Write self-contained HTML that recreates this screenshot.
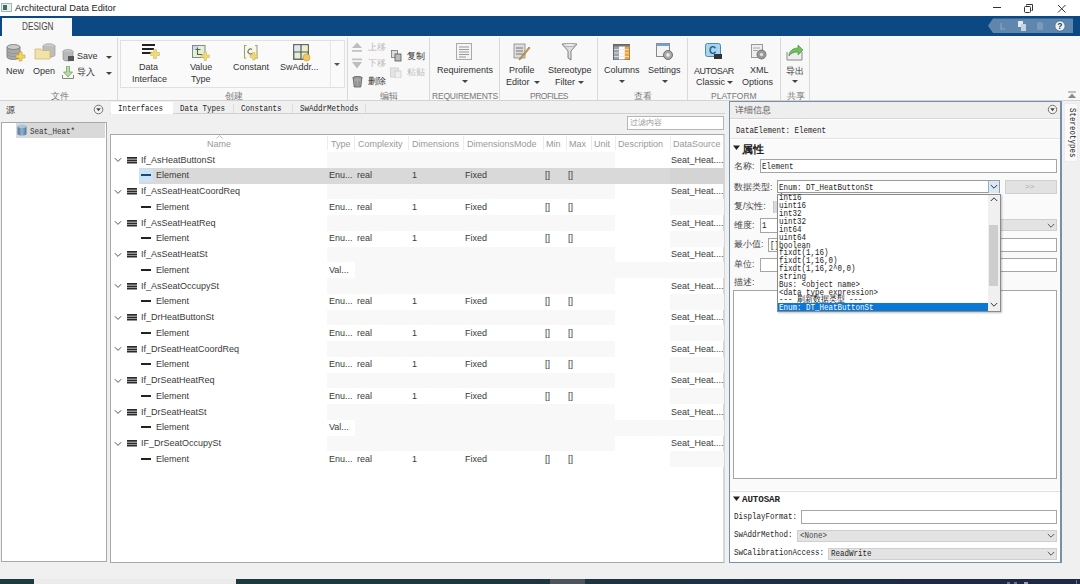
<!DOCTYPE html>
<html><head><meta charset="utf-8">
<style>
*{margin:0;padding:0;box-sizing:border-box}
html,body{width:1080px;height:584px;overflow:hidden;background:#f0f0f0;font-family:"Liberation Sans",sans-serif;color:#222}
.a{position:absolute}
.t{position:absolute;white-space:nowrap;line-height:1}
.m{font-family:"Liberation Mono",monospace}
.rib{font-size:9px;color:#333}
.gl{font-size:8.5px;color:#777}
.sep{position:absolute;width:1px;background:#d8d8d8}
.arr{position:absolute;width:0;height:0;border-left:3px solid transparent;border-right:3px solid transparent;border-top:3px solid #444}
</style></head><body>
<!-- title bar -->
<div class="a" style="left:0;top:0;width:1080px;height:16px;background:#fff"></div>
<div class="a" style="left:1px;top:3px;width:11px;height:9px;border:1px solid #9bb;background:#e8f0ee"></div>
<div class="a" style="left:3px;top:5px;width:4px;height:5px;background:#3f6f62"></div>
<div class="t" style="left:15px;top:4px;font-size:9.3px;color:#222">Architectural Data Editor</div>
<!-- window controls -->
<div class="a" style="left:993px;top:7px;width:8px;height:1px;background:#333"></div>
<svg class="a" style="left:1023px;top:3px" width="12" height="11"><path d="M3.5 2.5V1.5h6v6h-1" fill="none" stroke="#333" stroke-width="1"/><rect x="1.5" y="3.5" width="6" height="6" rx="1" fill="none" stroke="#333" stroke-width="1"/></svg>
<svg class="a" style="left:1057px;top:4px" width="10" height="10"><path d="M1 1L8.5 8.5M8.5 1L1 8.5" stroke="#333" stroke-width="1"/></svg>

<!-- blue bar -->
<div class="a" style="left:0;top:16px;width:1080px;height:20px;background:#0c4883"></div>
<div class="a" style="left:2px;top:18px;width:70px;height:18px;background:#f8f8f8"></div>
<div class="t" style="left:22px;top:22px;font-size:10px;color:#444;transform:scaleX(.82);transform-origin:0 0">DESIGN</div>
<!-- QAT -->
<svg class="a" style="left:987px;top:18px" width="87" height="16"><path d="M6 0.5H86V15H6L1 7.75Z" fill="#5f87ad"/>
<path d="M14 5v6h4" stroke="#7f9ec0" stroke-width="1.5" fill="none"/>
<rect x="31" y="3" width="5" height="6" fill="#dfe6ee"/><rect x="34" y="6" width="5" height="7" fill="#c7d2de"/>
<path d="M50 5c2-2 5-1 6 1v6h-6z" fill="#7c9bbb"/>
<circle cx="73" cy="8" r="5" fill="#eef2f7" stroke="#2a4a6a" stroke-width=".5"/><text x="70.3" y="11.3" font-family="Liberation Sans" font-weight="bold" font-size="8.5" fill="#1d3a5a">?</text>
</svg>

<!-- ribbon -->
<div class="a" style="left:0;top:36px;width:1080px;height:64px;background:#f8f8f8"></div>
<div class="a" style="left:0;top:100px;width:1080px;height:1px;background:#d3d3d3"></div>

<!-- ribbon: 文件 -->
<svg class="a" style="left:5.5px;top:44px" width="20" height="18">
 <path d="M1 3V13A6.5 2.5 0 0 0 14 13V3" fill="#a8a8a8" stroke="#777" stroke-width=".8"/>
 <ellipse cx="7.5" cy="3" rx="6.5" ry="2.5" fill="#c9c9c9" stroke="#777" stroke-width=".8"/>
 <path d="M1 7A7 2.5 0 0 0 15 7M1 10A7 2.5 0 0 0 15 10" fill="none" stroke="#888" stroke-width=".6"/>
 <path d="M13 8h3v3h3v3h-3v3h-3v-3h-3v-3h3z" fill="#f3d55b" stroke="#c9a227" stroke-width=".6"/>
</svg>
<div class="t rib" style="left:6px;top:67px">New</div>
<svg class="a" style="left:34px;top:43px" width="22" height="18">
 <ellipse cx="15" cy="3" rx="6" ry="2.2" fill="#cfcfcf" stroke="#999" stroke-width=".7"/>
 <path d="M9 3V12A6 2.2 0 0 0 21 12V3" fill="#bdbdbd" stroke="#999" stroke-width=".7"/>
 <path d="M1 6H7L8 7.5H16V16H1Z" fill="#f1e2a8" stroke="#c9b36a" stroke-width=".7"/>
</svg>
<div class="t rib" style="left:33px;top:67px">Open</div>
<svg class="a" style="left:62px;top:49px" width="13" height="13">
 <ellipse cx="6" cy="2.5" rx="5" ry="2" fill="#ccc" stroke="#888" stroke-width=".6"/>
 <path d="M1 2.5V10A5 2 0 0 0 11 10V2.5" fill="#b8b8b8" stroke="#888" stroke-width=".6"/>
 <rect x="6" y="7" width="6" height="5" fill="#555"/>
</svg>
<div class="t rib" style="left:77px;top:52px">Save</div>
<div class="arr" style="left:106px;top:56px"></div>
<svg class="a" style="left:62px;top:66px" width="13" height="13">
 <path d="M4.5 0h3v6h3l-4.5 5l-4.5-5h3z" fill="#b9dca0" stroke="#6a9a5a" stroke-width=".7"/>
 <path d="M0.5 9v3.5h11v-3.5" fill="none" stroke="#7a8a75" stroke-width="1"/>
</svg>
<div class="t rib" style="left:77px;top:68px">导入</div>
<div class="arr" style="left:106px;top:72px"></div>
<div class="t gl" style="left:51px;top:92px">文件</div>
<div class="sep" style="left:117px;top:38px;height:62px"></div>

<!-- 创建 gallery -->
<div class="a" style="left:120px;top:40px;width:225px;height:48px;background:#fafafa;border:1px solid #e0e0e0"></div>
<div class="a" style="left:330px;top:41px;width:1px;height:46px;background:#e6e6e6"></div>
<div class="arr" style="left:334px;top:63px;border-top-color:#555"></div>
<svg class="a" style="left:141px;top:44px" width="19" height="15">
 <rect x="1" y="0" width="13" height="2" fill="#222"/><rect x="1" y="4" width="12" height="2" fill="#222"/><rect x="1" y="8" width="10" height="2" fill="#222"/>
 <path d="M12.5 5.5h3v3h3v3h-3v3h-3v-3h-3v-3h3z" fill="#eedc7a" stroke="#c9b04a" stroke-width=".5"/>
</svg>
<div class="t rib" style="left:139px;top:63px">Data</div>
<div class="t rib" style="left:132px;top:75px">Interface</div>
<svg class="a" style="left:191px;top:44px" width="19" height="17">
 <rect x="1.5" y="1.5" width="12.5" height="12" fill="#e6f0d6" stroke="#888" stroke-width="1"/>
 <rect x="2" y="2" width="5" height="4" fill="#c9daf0"/>
 <path d="M6.5 3.5v7h5M4.5 5.5h5" fill="none" stroke="#4a6a4a" stroke-width="1.1"/>
 <path d="M13 8h2.5v3h3v2.5h-3v3h-2.5v-3h-3v-2.5h3z" fill="#eedc7a" stroke="#c9b04a" stroke-width=".5"/>
</svg>
<div class="t rib" style="left:190px;top:63px">Value</div>
<div class="t rib" style="left:191px;top:75px">Type</div>
<svg class="a" style="left:243px;top:44px" width="17" height="17">
 <path d="M3.5 1.5H1.5V14H3.5M12 1.5h2v12.5h-2" fill="none" stroke="#a0a070" stroke-width="1.1"/>
 <rect x="2" y="2" width="11" height="11.5" fill="#f3f5dc" opacity=".7"/>
 <path d="M9 5.5A2.5 2.5 0 1 0 9 9.5" fill="none" stroke="#777" stroke-width="1.1"/>
 <path d="M9.5 8.5h2.5v2.5h2.5v2.5h-2.5v2.5h-2.5v-2.5h-2.5v-2.5h2.5z" fill="#eedc7a" stroke="#c9b04a" stroke-width=".5"/>
</svg>
<div class="t rib" style="left:233px;top:63px">Constant</div>
<svg class="a" style="left:293px;top:44px" width="18" height="18">
 <rect x="0.75" y="0.75" width="14.5" height="14.5" fill="#e4efd2" stroke="#5a5a5a" stroke-width="1.3"/>
 <rect x="1.4" y="1.4" width="6" height="6" fill="#dbe8f2"/><rect x="8.6" y="1.4" width="6" height="6" fill="#eef0c8"/>
 <path d="M8 0.75V15.25M0.75 8H15.25" stroke="#5a5a5a" stroke-width="1.2"/>
 <circle cx="13.5" cy="13.5" r="3.5" fill="#f0c860" stroke="#c9962a" stroke-width=".6"/>
</svg>
<div class="t rib" style="left:280px;top:63px">SwAddr...</div>
<div class="t gl" style="left:225px;top:92px">创建</div>
<div class="sep" style="left:347px;top:38px;height:62px"></div>

<!-- 编辑 -->
<svg class="a" style="left:351px;top:42px" width="12" height="11"><path d="M6 0.5L11 6H1Z" fill="#bdbdbd"/><rect x="1" y="8" width="10" height="1.8" fill="#c4c4c4"/></svg>
<div class="t rib" style="left:368px;top:43px;color:#bbb">上移</div>
<svg class="a" style="left:351px;top:58px" width="12" height="11"><rect x="1" y="0.5" width="10" height="1.8" fill="#c4c4c4"/><path d="M6 10.5L11 4H1Z" fill="#bdbdbd"/></svg>
<div class="t rib" style="left:368px;top:59px;color:#bbb">下移</div>
<svg class="a" style="left:352px;top:76px" width="11" height="12"><ellipse cx="5.5" cy="2" rx="4.8" ry="1.6" fill="#999" stroke="#444" stroke-width=".7"/><path d="M1.2 2.5L2.2 11h6.6l1-8.5" fill="#a8a8a8" stroke="#444" stroke-width=".7"/><path d="M4 5v5M7 5v5" stroke="#666" stroke-width=".6"/></svg>
<div class="t rib" style="left:368px;top:77px">删除</div>
<svg class="a" style="left:391px;top:50px" width="11" height="12"><rect x="0.5" y="0.5" width="6" height="7" fill="#ddd" stroke="#777" stroke-width=".8"/><rect x="4" y="4" width="6" height="7" fill="#bbb" stroke="#555" stroke-width=".8"/></svg>
<div class="t rib" style="left:407px;top:52px">复制</div>
<svg class="a" style="left:390px;top:67px" width="12" height="11"><rect x="0.5" y="1" width="8" height="9" fill="#e4e4e4" stroke="#ccc" stroke-width=".8"/><rect x="5" y="4" width="6" height="7" fill="#eee" stroke="#ccc" stroke-width=".8"/></svg>
<div class="t rib" style="left:407px;top:68px;color:#bbb">粘贴</div>
<div class="t gl" style="left:380px;top:92px">编辑</div>
<div class="sep" style="left:429px;top:38px;height:62px"></div>

<!-- REQUIREMENTS -->
<svg class="a" style="left:456px;top:43px" width="17" height="18"><rect x="0.5" y="0.5" width="15" height="16" fill="#f4f4f4" stroke="#aaa"/><path d="M3 4h10M3 6.5h10M3 9h10M3 11.5h10M3 14h7" stroke="#999" stroke-width="1"/></svg>
<div class="t rib" style="left:437px;top:66px">Requirements</div>
<div class="arr" style="left:462px;top:80px"></div>
<div class="t gl" style="left:432px;top:92px;letter-spacing:-.2px">REQUIREMENTS</div>
<div class="sep" style="left:499px;top:38px;height:62px"></div>

<!-- PROFILES -->
<svg class="a" style="left:513px;top:43px" width="19" height="18"><rect x="1" y="1" width="11" height="14" fill="#ddd" stroke="#888" stroke-width=".8"/><path d="M3 5h7M3 8h7M3 11h7" stroke="#777"/><path d="M17 5L8 16l-2 1 1-2 9-11z" fill="#d9a441" stroke="#8a6a2a" stroke-width=".6"/></svg>
<div class="t rib" style="left:509px;top:66px">Profile</div>
<div class="t rib" style="left:506px;top:78px">Editor</div>
<div class="arr" style="left:534px;top:81px"></div>
<svg class="a" style="left:561px;top:43px" width="17" height="18"><path d="M1 1h15l-6 7v9l-3-2V8z" fill="#ddd" stroke="#777" stroke-width=".9"/><ellipse cx="8.5" cy="2" rx="7" ry="1.5" fill="#eee" stroke="#888" stroke-width=".6"/></svg>
<div class="t rib" style="left:548px;top:66px">Stereotype</div>
<div class="t rib" style="left:555px;top:78px">Filter</div>
<div class="arr" style="left:578px;top:81px"></div>
<div class="t gl" style="left:530px;top:92px;letter-spacing:-.5px">PROFILES</div>
<div class="sep" style="left:597px;top:38px;height:62px"></div>

<!-- 查看 -->
<svg class="a" style="left:613px;top:44px" width="18" height="17"><rect x="0.5" y="0.5" width="16" height="15" fill="#fff" stroke="#666"/><rect x="1" y="1" width="5" height="14.5" fill="#9aa3ad"/><rect x="11.5" y="1" width="5" height="14.5" fill="#f0a23a"/><rect x="6" y="1" width="5.5" height="14.5" fill="#fbfbfb"/><path d="M1 5.5h15M1 9h15M1 12.5h15" stroke="#e9e9e9" stroke-width=".8"/><rect x="1" y="1" width="15.5" height="1.5" fill="#777"/></svg>
<div class="t rib" style="left:604px;top:66px">Columns</div>
<div class="arr" style="left:619px;top:80px"></div>
<svg class="a" style="left:656px;top:43px" width="18" height="18"><rect x="0.5" y="0.5" width="13" height="13" fill="#f3f3f3" stroke="#888"/><rect x="0.5" y="0.5" width="13" height="2.5" fill="#7aa0c8"/><circle cx="12" cy="12" r="4.5" fill="#aaa" stroke="#555" stroke-width=".8"/><circle cx="12" cy="12" r="1.8" fill="#eee"/></svg>
<div class="t rib" style="left:648px;top:66px">Settings</div>
<div class="arr" style="left:662px;top:80px"></div>
<div class="t gl" style="left:634px;top:92px">查看</div>
<div class="sep" style="left:687px;top:38px;height:62px"></div>

<!-- PLATFORM -->
<svg class="a" style="left:705px;top:43px" width="18" height="18"><rect x="0.5" y="0.5" width="15" height="13" rx="2" fill="#a9d4ef" stroke="#4a8ab8"/><text x="4" y="11" font-family="Liberation Sans" font-weight="bold" font-size="10" fill="#2a5f8a">C</text><rect x="9" y="11" width="8" height="5" fill="#333"/></svg>
<div class="t rib" style="left:694px;top:66.5px;letter-spacing:-.5px">AUTOSAR</div>
<div class="t rib" style="left:696px;top:78px">Classic</div>
<div class="arr" style="left:727px;top:81px"></div>
<svg class="a" style="left:751px;top:44px" width="16" height="16"><rect x="0.5" y="0.5" width="11" height="13" fill="#eee" stroke="#999"/><path d="M2 4h7M2 6.5h5" stroke="#aaa"/><circle cx="10.5" cy="10.5" r="4.5" fill="#999" stroke="#666" stroke-width=".8"/><circle cx="10.5" cy="10.5" r="1.7" fill="#ddd"/></svg>
<div class="t rib" style="left:750px;top:66px">XML</div>
<div class="t rib" style="left:742px;top:78px">Options</div>
<div class="t gl" style="left:711px;top:92px">PLATFORM</div>
<div class="sep" style="left:780px;top:38px;height:62px"></div>

<!-- 共享 -->
<svg class="a" style="left:786px;top:43px" width="18" height="19"><path d="M1 9v8h15v-8" fill="#eee" stroke="#888" stroke-width="1"/><path d="M3 13c0-5 4-8 9-8V2l5 5-5 5V9c-4 0-7 1-9 4z" fill="#6fbf5a" stroke="#3f8a3a" stroke-width=".6"/></svg>
<div class="t rib" style="left:786px;top:67px">导出</div>
<div class="arr" style="left:792px;top:80px"></div>
<div class="t gl" style="left:787px;top:92px">共享</div>
<div class="sep" style="left:809px;top:38px;height:62px"></div>
<svg class="a" style="left:1067px;top:91px" width="10" height="8"><path d="M1 1h8" stroke="#888"/><path d="M5 2.5L9 7H1z" fill="#888"/></svg>

<!-- left panel -->
<div class="t" style="left:6px;top:105.5px;font-size:9px;color:#333">源</div>
<svg class="a" style="left:93px;top:104px" width="11" height="11"><circle cx="5.5" cy="5.5" r="4.3" fill="#f3f3f3" stroke="#666" stroke-width=".9"/><path d="M3.2 4.3h4.6L5.5 7.3z" fill="#444"/></svg>
<div class="a" style="left:1px;top:122px;width:106px;height:440px;background:#fff;border:1px solid #a9a9a9"></div>
<div class="a" style="left:16px;top:123px;width:89px;height:15px;background:#d9d9d9"></div>
<svg class="a" style="left:17px;top:124px" width="10" height="12"><defs><linearGradient id="dbg" x1="0" x2="1"><stop offset="0" stop-color="#4f7698"/><stop offset=".5" stop-color="#8fb3d0"/><stop offset="1" stop-color="#4f7698"/></linearGradient></defs><path d="M.5 2.2v7.6A4.5 1.8 0 0 0 9.5 9.8V2.2" fill="url(#dbg)"/><ellipse cx="5" cy="2.2" rx="4.5" ry="1.8" fill="#a9c5dc"/></svg>
<div class="t m" style="left:30px;top:128px;font-size:8.5px;letter-spacing:0;transform:scaleX(.882);transform-origin:0 50%;color:#333">Seat_Heat*</div>

<!-- tabs -->
<div class="a" style="left:110px;top:113px;width:615px;height:1px;background:#d0d0d0"></div>
<div class="a" style="left:111px;top:102px;width:62px;height:12px;background:#fff"></div>
<div class="t m" style="left:118px;top:105px;font-size:8.5px;letter-spacing:0;transform:scaleX(.882);transform-origin:0 50%;color:#222">Interfaces</div>
<div class="t m" style="left:180px;top:105px;font-size:8.5px;letter-spacing:0;transform:scaleX(.882);transform-origin:0 50%;color:#222">Data Types</div>
<div class="a" style="left:233px;top:104px;width:1px;height:9px;background:#ddd"></div>
<div class="t m" style="left:241px;top:105px;font-size:8.5px;letter-spacing:0;transform:scaleX(.882);transform-origin:0 50%;color:#222">Constants</div>
<div class="a" style="left:292px;top:104px;width:1px;height:9px;background:#ddd"></div>
<div class="t m" style="left:300px;top:105px;font-size:8.5px;letter-spacing:0;transform:scaleX(.882);transform-origin:0 50%;color:#222">SwAddrMethods</div>
<div class="a" style="left:365px;top:104px;width:1px;height:9px;background:#ddd"></div>
<!-- filter -->
<div class="a" style="left:627px;top:116px;width:97px;height:14px;background:#fff;border:1px solid #b5b5b5"></div>
<div class="t" style="left:630px;top:119px;font-size:8px;color:#999">过滤内容</div>

<!-- table -->
<div class="a" id="tbl" style="left:110px;top:134px;width:615px;height:429px;background:#fff;border:1px solid #a9a9a9;border-right:2px solid #d6d6d6"></div>
<div class="t" style="left:207px;top:139.8px;font-size:9px;color:#999">Name</div>
<svg class="a" style="left:216px;top:135px" width="7" height="4"><path d="M.5 3.5L3.5 .5L6.5 3.5" fill="none" stroke="#aaa" stroke-width=".8"/></svg>
<div class="t" style="left:331px;top:139.8px;font-size:9px;color:#999">Type</div>
<div class="t" style="left:358px;top:139.8px;font-size:9px;color:#999">Complexity</div>
<div class="t" style="left:412px;top:139.8px;font-size:9px;color:#999">Dimensions</div>
<div class="t" style="left:467px;top:139.8px;font-size:9px;color:#999">DimensionsMode</div>
<div class="t" style="left:546px;top:139.8px;font-size:9px;color:#999">Min</div>
<div class="t" style="left:569px;top:139.8px;font-size:9px;color:#999">Max</div>
<div class="t" style="left:594px;top:139.8px;font-size:9px;color:#999">Unit</div>
<div class="t" style="left:618px;top:139.8px;font-size:9px;color:#999">Description</div>
<div class="t" style="left:673px;top:139.8px;font-size:9px;color:#999">DataSource</div>
<div class="a" style="left:327px;top:136px;width:1px;height:14px;background:#ececec"></div>
<div class="a" style="left:354px;top:136px;width:1px;height:14px;background:#ececec"></div>
<div class="a" style="left:408px;top:136px;width:1px;height:14px;background:#ececec"></div>
<div class="a" style="left:463px;top:136px;width:1px;height:14px;background:#ececec"></div>
<div class="a" style="left:543px;top:136px;width:1px;height:14px;background:#ececec"></div>
<div class="a" style="left:566px;top:136px;width:1px;height:14px;background:#ececec"></div>
<div class="a" style="left:591px;top:136px;width:1px;height:14px;background:#ececec"></div>
<div class="a" style="left:615px;top:136px;width:1px;height:14px;background:#ececec"></div>
<div class="a" style="left:670px;top:136px;width:1px;height:14px;background:#ececec"></div>
<div class="a" style="left:327px;top:152.0px;width:288px;height:15.75px;background:#f8f8f8"></div>
<div class="a" style="left:139px;top:167.75px;width:585px;height:15.75px;background:#d9d9d9"></div>
<div class="a" style="left:670px;top:167.75px;width:54px;height:15.75px;background:#d4d4d4"></div>
<svg class="a" style="left:114px;top:157.0px" width="8" height="6"><path d="M.8 1.2L4 4.4L7.2 1.2" fill="none" stroke="#555" stroke-width="1"/></svg>
<svg class="a" style="left:127px;top:156.5px" width="11" height="7"><path d="M0 .9h10M0 3.3h10M0 5.7h10" stroke="#2a2a2a" stroke-width="1.8"/></svg>
<div class="t" style="left:141px;top:155.5px;font-size:9px;color:#3a3a3a">If_AsHeatButtonSt</div>
<div class="t" style="left:671px;top:155.5px;font-size:9px;color:#3a3a3a">Seat_Heat....</div>
<div class="a" style="left:139px;top:169px;width:14px;height:13px;background:#cde2f4"></div>
<div class="a" style="left:141px;top:174.25px;width:10px;height:2px;background:#1a4a7a"></div>
<div class="t" style="left:156px;top:171.25px;font-size:9px;color:#3a3a3a">Element</div>
<div class="t" style="left:329px;top:171.25px;font-size:9px;color:#3a3a3a">Enu...</div>
<div class="t" style="left:357px;top:171.25px;font-size:9px;color:#3a3a3a">real</div>
<div class="t" style="left:412px;top:171.25px;font-size:9px;color:#3a3a3a">1</div>
<div class="t" style="left:465px;top:171.25px;font-size:9px;color:#3a3a3a">Fixed</div>
<div class="t" style="left:545px;top:171.25px;font-size:9px;color:#3a3a3a">[]</div>
<div class="t" style="left:568px;top:171.25px;font-size:9px;color:#3a3a3a">[]</div>
<div class="a" style="left:327px;top:183.5px;width:288px;height:15.75px;background:#f8f8f8"></div>
<div class="a" style="left:670px;top:199.25px;width:54px;height:15.75px;background:#f8f8f8"></div>
<svg class="a" style="left:114px;top:188.5px" width="8" height="6"><path d="M.8 1.2L4 4.4L7.2 1.2" fill="none" stroke="#555" stroke-width="1"/></svg>
<svg class="a" style="left:127px;top:188.0px" width="11" height="7"><path d="M0 .9h10M0 3.3h10M0 5.7h10" stroke="#2a2a2a" stroke-width="1.8"/></svg>
<div class="t" style="left:141px;top:187.0px;font-size:9px;color:#3a3a3a">If_AsSeatHeatCoordReq</div>
<div class="t" style="left:671px;top:187.0px;font-size:9px;color:#3a3a3a">Seat_Heat....</div>
<div class="a" style="left:141px;top:205.75px;width:10px;height:2px;background:#222"></div>
<div class="t" style="left:156px;top:202.75px;font-size:9px;color:#3a3a3a">Element</div>
<div class="t" style="left:329px;top:202.75px;font-size:9px;color:#3a3a3a">Enu...</div>
<div class="t" style="left:357px;top:202.75px;font-size:9px;color:#3a3a3a">real</div>
<div class="t" style="left:412px;top:202.75px;font-size:9px;color:#3a3a3a">1</div>
<div class="t" style="left:465px;top:202.75px;font-size:9px;color:#3a3a3a">Fixed</div>
<div class="t" style="left:545px;top:202.75px;font-size:9px;color:#3a3a3a">[]</div>
<div class="t" style="left:568px;top:202.75px;font-size:9px;color:#3a3a3a">[]</div>
<div class="a" style="left:327px;top:215.0px;width:288px;height:15.75px;background:#f8f8f8"></div>
<div class="a" style="left:670px;top:230.75px;width:54px;height:15.75px;background:#f8f8f8"></div>
<svg class="a" style="left:114px;top:220.0px" width="8" height="6"><path d="M.8 1.2L4 4.4L7.2 1.2" fill="none" stroke="#555" stroke-width="1"/></svg>
<svg class="a" style="left:127px;top:219.5px" width="11" height="7"><path d="M0 .9h10M0 3.3h10M0 5.7h10" stroke="#2a2a2a" stroke-width="1.8"/></svg>
<div class="t" style="left:141px;top:218.5px;font-size:9px;color:#3a3a3a">If_AsSeatHeatReq</div>
<div class="t" style="left:671px;top:218.5px;font-size:9px;color:#3a3a3a">Seat_Heat....</div>
<div class="a" style="left:141px;top:237.25px;width:10px;height:2px;background:#222"></div>
<div class="t" style="left:156px;top:234.25px;font-size:9px;color:#3a3a3a">Element</div>
<div class="t" style="left:329px;top:234.25px;font-size:9px;color:#3a3a3a">Enu...</div>
<div class="t" style="left:357px;top:234.25px;font-size:9px;color:#3a3a3a">real</div>
<div class="t" style="left:412px;top:234.25px;font-size:9px;color:#3a3a3a">1</div>
<div class="t" style="left:465px;top:234.25px;font-size:9px;color:#3a3a3a">Fixed</div>
<div class="t" style="left:545px;top:234.25px;font-size:9px;color:#3a3a3a">[]</div>
<div class="t" style="left:568px;top:234.25px;font-size:9px;color:#3a3a3a">[]</div>
<div class="a" style="left:327px;top:246.5px;width:288px;height:15.75px;background:#f8f8f8"></div>
<div class="a" style="left:355px;top:262.25px;width:369px;height:15.75px;background:#f8f8f8"></div>
<svg class="a" style="left:114px;top:251.5px" width="8" height="6"><path d="M.8 1.2L4 4.4L7.2 1.2" fill="none" stroke="#555" stroke-width="1"/></svg>
<svg class="a" style="left:127px;top:251.0px" width="11" height="7"><path d="M0 .9h10M0 3.3h10M0 5.7h10" stroke="#2a2a2a" stroke-width="1.8"/></svg>
<div class="t" style="left:141px;top:250.0px;font-size:9px;color:#3a3a3a">If_AsSeatHeatSt</div>
<div class="t" style="left:671px;top:250.0px;font-size:9px;color:#3a3a3a">Seat_Heat....</div>
<div class="a" style="left:141px;top:268.75px;width:10px;height:2px;background:#222"></div>
<div class="t" style="left:156px;top:265.75px;font-size:9px;color:#3a3a3a">Element</div>
<div class="t" style="left:329px;top:265.75px;font-size:9px;color:#3a3a3a">Val...</div>
<div class="a" style="left:327px;top:278.0px;width:288px;height:15.75px;background:#f8f8f8"></div>
<div class="a" style="left:670px;top:293.75px;width:54px;height:15.75px;background:#f8f8f8"></div>
<svg class="a" style="left:114px;top:283.0px" width="8" height="6"><path d="M.8 1.2L4 4.4L7.2 1.2" fill="none" stroke="#555" stroke-width="1"/></svg>
<svg class="a" style="left:127px;top:282.5px" width="11" height="7"><path d="M0 .9h10M0 3.3h10M0 5.7h10" stroke="#2a2a2a" stroke-width="1.8"/></svg>
<div class="t" style="left:141px;top:281.5px;font-size:9px;color:#3a3a3a">If_AsSeatOccupySt</div>
<div class="t" style="left:671px;top:281.5px;font-size:9px;color:#3a3a3a">Seat_Heat....</div>
<div class="a" style="left:141px;top:300.25px;width:10px;height:2px;background:#222"></div>
<div class="t" style="left:156px;top:297.25px;font-size:9px;color:#3a3a3a">Element</div>
<div class="t" style="left:329px;top:297.25px;font-size:9px;color:#3a3a3a">Enu...</div>
<div class="t" style="left:357px;top:297.25px;font-size:9px;color:#3a3a3a">real</div>
<div class="t" style="left:412px;top:297.25px;font-size:9px;color:#3a3a3a">1</div>
<div class="t" style="left:465px;top:297.25px;font-size:9px;color:#3a3a3a">Fixed</div>
<div class="t" style="left:545px;top:297.25px;font-size:9px;color:#3a3a3a">[]</div>
<div class="t" style="left:568px;top:297.25px;font-size:9px;color:#3a3a3a">[]</div>
<div class="a" style="left:327px;top:309.5px;width:288px;height:15.75px;background:#f8f8f8"></div>
<div class="a" style="left:670px;top:325.25px;width:54px;height:15.75px;background:#f8f8f8"></div>
<svg class="a" style="left:114px;top:314.5px" width="8" height="6"><path d="M.8 1.2L4 4.4L7.2 1.2" fill="none" stroke="#555" stroke-width="1"/></svg>
<svg class="a" style="left:127px;top:314.0px" width="11" height="7"><path d="M0 .9h10M0 3.3h10M0 5.7h10" stroke="#2a2a2a" stroke-width="1.8"/></svg>
<div class="t" style="left:141px;top:313.0px;font-size:9px;color:#3a3a3a">If_DrHeatButtonSt</div>
<div class="t" style="left:671px;top:313.0px;font-size:9px;color:#3a3a3a">Seat_Heat....</div>
<div class="a" style="left:141px;top:331.75px;width:10px;height:2px;background:#222"></div>
<div class="t" style="left:156px;top:328.75px;font-size:9px;color:#3a3a3a">Element</div>
<div class="t" style="left:329px;top:328.75px;font-size:9px;color:#3a3a3a">Enu...</div>
<div class="t" style="left:357px;top:328.75px;font-size:9px;color:#3a3a3a">real</div>
<div class="t" style="left:412px;top:328.75px;font-size:9px;color:#3a3a3a">1</div>
<div class="t" style="left:465px;top:328.75px;font-size:9px;color:#3a3a3a">Fixed</div>
<div class="t" style="left:545px;top:328.75px;font-size:9px;color:#3a3a3a">[]</div>
<div class="t" style="left:568px;top:328.75px;font-size:9px;color:#3a3a3a">[]</div>
<div class="a" style="left:327px;top:341.0px;width:288px;height:15.75px;background:#f8f8f8"></div>
<div class="a" style="left:670px;top:356.75px;width:54px;height:15.75px;background:#f8f8f8"></div>
<svg class="a" style="left:114px;top:346.0px" width="8" height="6"><path d="M.8 1.2L4 4.4L7.2 1.2" fill="none" stroke="#555" stroke-width="1"/></svg>
<svg class="a" style="left:127px;top:345.5px" width="11" height="7"><path d="M0 .9h10M0 3.3h10M0 5.7h10" stroke="#2a2a2a" stroke-width="1.8"/></svg>
<div class="t" style="left:141px;top:344.5px;font-size:9px;color:#3a3a3a">If_DrSeatHeatCoordReq</div>
<div class="t" style="left:671px;top:344.5px;font-size:9px;color:#3a3a3a">Seat_Heat....</div>
<div class="a" style="left:141px;top:363.25px;width:10px;height:2px;background:#222"></div>
<div class="t" style="left:156px;top:360.25px;font-size:9px;color:#3a3a3a">Element</div>
<div class="t" style="left:329px;top:360.25px;font-size:9px;color:#3a3a3a">Enu...</div>
<div class="t" style="left:357px;top:360.25px;font-size:9px;color:#3a3a3a">real</div>
<div class="t" style="left:412px;top:360.25px;font-size:9px;color:#3a3a3a">1</div>
<div class="t" style="left:465px;top:360.25px;font-size:9px;color:#3a3a3a">Fixed</div>
<div class="t" style="left:545px;top:360.25px;font-size:9px;color:#3a3a3a">[]</div>
<div class="t" style="left:568px;top:360.25px;font-size:9px;color:#3a3a3a">[]</div>
<div class="a" style="left:327px;top:372.5px;width:288px;height:15.75px;background:#f8f8f8"></div>
<div class="a" style="left:670px;top:388.25px;width:54px;height:15.75px;background:#f8f8f8"></div>
<svg class="a" style="left:114px;top:377.5px" width="8" height="6"><path d="M.8 1.2L4 4.4L7.2 1.2" fill="none" stroke="#555" stroke-width="1"/></svg>
<svg class="a" style="left:127px;top:377.0px" width="11" height="7"><path d="M0 .9h10M0 3.3h10M0 5.7h10" stroke="#2a2a2a" stroke-width="1.8"/></svg>
<div class="t" style="left:141px;top:376.0px;font-size:9px;color:#3a3a3a">If_DrSeatHeatReq</div>
<div class="t" style="left:671px;top:376.0px;font-size:9px;color:#3a3a3a">Seat_Heat....</div>
<div class="a" style="left:141px;top:394.75px;width:10px;height:2px;background:#222"></div>
<div class="t" style="left:156px;top:391.75px;font-size:9px;color:#3a3a3a">Element</div>
<div class="t" style="left:329px;top:391.75px;font-size:9px;color:#3a3a3a">Enu...</div>
<div class="t" style="left:357px;top:391.75px;font-size:9px;color:#3a3a3a">real</div>
<div class="t" style="left:412px;top:391.75px;font-size:9px;color:#3a3a3a">1</div>
<div class="t" style="left:465px;top:391.75px;font-size:9px;color:#3a3a3a">Fixed</div>
<div class="t" style="left:545px;top:391.75px;font-size:9px;color:#3a3a3a">[]</div>
<div class="t" style="left:568px;top:391.75px;font-size:9px;color:#3a3a3a">[]</div>
<div class="a" style="left:327px;top:404.0px;width:288px;height:15.75px;background:#f8f8f8"></div>
<div class="a" style="left:355px;top:419.75px;width:369px;height:15.75px;background:#f8f8f8"></div>
<svg class="a" style="left:114px;top:409.0px" width="8" height="6"><path d="M.8 1.2L4 4.4L7.2 1.2" fill="none" stroke="#555" stroke-width="1"/></svg>
<svg class="a" style="left:127px;top:408.5px" width="11" height="7"><path d="M0 .9h10M0 3.3h10M0 5.7h10" stroke="#2a2a2a" stroke-width="1.8"/></svg>
<div class="t" style="left:141px;top:407.5px;font-size:9px;color:#3a3a3a">If_DrSeatHeatSt</div>
<div class="t" style="left:671px;top:407.5px;font-size:9px;color:#3a3a3a">Seat_Heat....</div>
<div class="a" style="left:141px;top:426.25px;width:10px;height:2px;background:#222"></div>
<div class="t" style="left:156px;top:423.25px;font-size:9px;color:#3a3a3a">Element</div>
<div class="t" style="left:329px;top:423.25px;font-size:9px;color:#3a3a3a">Val...</div>
<div class="a" style="left:327px;top:435.5px;width:288px;height:15.75px;background:#f8f8f8"></div>
<div class="a" style="left:670px;top:451.25px;width:54px;height:15.75px;background:#f8f8f8"></div>
<svg class="a" style="left:114px;top:440.5px" width="8" height="6"><path d="M.8 1.2L4 4.4L7.2 1.2" fill="none" stroke="#555" stroke-width="1"/></svg>
<svg class="a" style="left:127px;top:440.0px" width="11" height="7"><path d="M0 .9h10M0 3.3h10M0 5.7h10" stroke="#2a2a2a" stroke-width="1.8"/></svg>
<div class="t" style="left:141px;top:439.0px;font-size:9px;color:#3a3a3a">IF_DrSeatOccupySt</div>
<div class="t" style="left:671px;top:439.0px;font-size:9px;color:#3a3a3a">Seat_Heat....</div>
<div class="a" style="left:141px;top:457.75px;width:10px;height:2px;background:#222"></div>
<div class="t" style="left:156px;top:454.75px;font-size:9px;color:#3a3a3a">Element</div>
<div class="t" style="left:329px;top:454.75px;font-size:9px;color:#3a3a3a">Enu...</div>
<div class="t" style="left:357px;top:454.75px;font-size:9px;color:#3a3a3a">real</div>
<div class="t" style="left:412px;top:454.75px;font-size:9px;color:#3a3a3a">1</div>
<div class="t" style="left:465px;top:454.75px;font-size:9px;color:#3a3a3a">Fixed</div>
<div class="t" style="left:545px;top:454.75px;font-size:9px;color:#3a3a3a">[]</div>
<div class="t" style="left:568px;top:454.75px;font-size:9px;color:#3a3a3a">[]</div>

<!-- detail panel -->
<div class="a" style="left:729px;top:101px;width:333px;height:462px;background:#fff;border:1px solid #7590a8;border-right:2px solid #7590a8"></div>
<div class="a" style="left:730px;top:102px;width:330px;height:17px;background:#eeeeee;border-bottom:1px solid #d6d6d6"></div>
<div class="t" style="left:735px;top:106px;font-size:8.5px;color:#555">详细信息</div>
<svg class="a" style="left:1047px;top:104px" width="11" height="11"><circle cx="5.5" cy="5.5" r="4.2" fill="#f3f3f3" stroke="#666" stroke-width=".9"/><path d="M3.2 4.3h4.6L5.5 7.3z" fill="#444"/></svg>
<div class="a" style="left:730px;top:120px;width:330px;height:19px;background:#f7f7f7;border-bottom:1px solid #e3e3e3"></div>
<div class="t m" style="left:736px;top:126.5px;font-size:8.5px;letter-spacing:0;transform:scaleX(.882);transform-origin:0 50%;color:#222">DataElement: Element</div>
<div class="a" style="left:730px;top:140px;width:330px;height:350px;background:#fafafa"></div>
<svg class="a" style="left:733px;top:145px" width="8" height="6"><path d="M0 .5h7L3.5 5z" fill="#222"/></svg>
<div class="t" style="left:742px;top:144px;font-size:10.5px;font-weight:bold;color:#222">属性</div>
<div class="t" style="left:734px;top:162px;font-size:8.5px;color:#444">名称:</div>
<div class="a" style="left:760px;top:159px;width:297px;height:14px;background:#fff;border:1px solid #a5a5a5"></div>
<div class="t m" style="left:762px;top:163px;font-size:8.5px;letter-spacing:0;transform:scaleX(.882);transform-origin:0 50%;color:#222">Element</div>
<div class="t" style="left:734px;top:183px;font-size:8.5px;color:#444">数据类型:</div>
<div class="a" style="left:777px;top:180px;width:223px;height:13px;background:#fff;border:1px solid #9a9a9a"></div>
<div class="a" style="left:988px;top:181px;width:11px;height:12px;background:#d8e8f7;border-left:1px solid #8fb0d0"></div>
<svg class="a" style="left:990px;top:184px" width="8" height="6"><path d="M.8 1L4 4.2L7.2 1" fill="none" stroke="#333" stroke-width="1"/></svg>
<div class="t m" style="left:779px;top:184px;font-size:8.5px;letter-spacing:0;transform:scaleX(.882);transform-origin:0 50%;color:#222">Enum: DT_HeatButtonSt</div>
<div class="a" style="left:1005px;top:180px;width:52px;height:14px;background:#e2e2e2;border:1px solid #d0d0d0"></div>
<div class="t" style="left:1025px;top:183px;font-size:8px;color:#aaa">&gt;&gt;</div>
<div class="t" style="left:734px;top:202px;font-size:8.5px;color:#444">复/实性:</div>
<div class="a" style="left:773px;top:201px;width:5px;height:12px;background:#dadada;border-left:1px solid #c4c4c4"></div>
<div class="t" style="left:734px;top:221px;font-size:8.5px;color:#444">维度:</div>
<div class="a" style="left:760px;top:218px;width:20px;height:15px;background:#fff;border:1px solid #a5a5a5"></div>
<div class="t m" style="left:762px;top:222px;font-size:8.5px;letter-spacing:0;transform:scaleX(.882);transform-origin:0 50%;color:#222">1</div>
<div class="a" style="left:999px;top:219px;width:58px;height:12px;background:#e3e3e3;border:1px solid #cfcfcf;border-left:none"></div>
<svg class="a" style="left:1047px;top:223px" width="8" height="6"><path d="M.8 1L4 4.2L7.2 1" fill="none" stroke="#555" stroke-width="1"/></svg>
<div class="t" style="left:734px;top:240px;font-size:8.5px;color:#444">最小值:</div>
<div class="a" style="left:768px;top:238px;width:12px;height:14px;background:#fff;border:1px solid #a5a5a5"></div>
<div class="t m" style="left:770px;top:242px;font-size:8.5px;letter-spacing:0;transform:scaleX(.882);transform-origin:0 50%;color:#222">[]</div>
<div class="a" style="left:999px;top:238px;width:58px;height:14px;background:#fff;border:1px solid #a5a5a5;border-left:none"></div>
<div class="t" style="left:734px;top:260px;font-size:8.5px;color:#444">单位:</div>
<div class="a" style="left:760px;top:258px;width:20px;height:14px;background:#fff;border:1px solid #a5a5a5;border-right:none"></div>
<div class="a" style="left:999px;top:258px;width:58px;height:14px;background:#fff;border:1px solid #a5a5a5;border-left:none"></div>
<div class="t" style="left:734px;top:278px;font-size:8.5px;color:#444">描述:</div>
<div class="a" style="left:733px;top:290px;width:324px;height:189px;background:#fff;border:1px solid #a5a5a5"></div>

<!-- dropdown list -->
<div class="a" style="left:777px;top:194px;width:224px;height:118px;background:#fff;border:1px solid #8a8a8a;box-shadow:1px 1px 2px rgba(0,0,0,.25)"></div>
<div class="a" style="left:988px;top:195px;width:12px;height:116px;background:#f0f0f0"></div>
<div class="a" style="left:989px;top:225px;width:9px;height:61px;background:#cdcdcd"></div>
<svg class="a" style="left:990px;top:196px" width="8" height="6"><path d="M.8 5L4 1.8L7.2 5" fill="none" stroke="#333" stroke-width="1"/></svg>
<svg class="a" style="left:990px;top:302px" width="8" height="6"><path d="M.8 1L4 4.2L7.2 1" fill="none" stroke="#333" stroke-width="1"/></svg>
<div class="a" style="left:778px;top:303px;width:210px;height:8px;background:#0a78d7"></div>
<div class="t m" style="left:779px;top:194.40px;font-size:8.5px;letter-spacing:0;transform:scaleX(.882);transform-origin:0 50%;color:#222">int16</div>
<div class="t m" style="left:779px;top:202.25px;font-size:8.5px;letter-spacing:0;transform:scaleX(.882);transform-origin:0 50%;color:#222">uint16</div>
<div class="t m" style="left:779px;top:210.10px;font-size:8.5px;letter-spacing:0;transform:scaleX(.882);transform-origin:0 50%;color:#222">int32</div>
<div class="t m" style="left:779px;top:217.95px;font-size:8.5px;letter-spacing:0;transform:scaleX(.882);transform-origin:0 50%;color:#222">uint32</div>
<div class="t m" style="left:779px;top:225.80px;font-size:8.5px;letter-spacing:0;transform:scaleX(.882);transform-origin:0 50%;color:#222">int64</div>
<div class="t m" style="left:779px;top:233.65px;font-size:8.5px;letter-spacing:0;transform:scaleX(.882);transform-origin:0 50%;color:#222">uint64</div>
<div class="t m" style="left:779px;top:241.50px;font-size:8.5px;letter-spacing:0;transform:scaleX(.882);transform-origin:0 50%;color:#222">boolean</div>
<div class="t m" style="left:779px;top:249.35px;font-size:8.5px;letter-spacing:0;transform:scaleX(.882);transform-origin:0 50%;color:#222">fixdt(1,16)</div>
<div class="t m" style="left:779px;top:257.20px;font-size:8.5px;letter-spacing:0;transform:scaleX(.882);transform-origin:0 50%;color:#222">fixdt(1,16,0)</div>
<div class="t m" style="left:779px;top:265.05px;font-size:8.5px;letter-spacing:0;transform:scaleX(.882);transform-origin:0 50%;color:#222">fixdt(1,16,2^0,0)</div>
<div class="t m" style="left:779px;top:272.90px;font-size:8.5px;letter-spacing:0;transform:scaleX(.882);transform-origin:0 50%;color:#222">string</div>
<div class="t m" style="left:779px;top:280.75px;font-size:8.5px;letter-spacing:0;transform:scaleX(.882);transform-origin:0 50%;color:#222">Bus: &lt;object name&gt;</div>
<div class="t m" style="left:779px;top:288.60px;font-size:8.5px;letter-spacing:0;transform:scaleX(.882);transform-origin:0 50%;color:#222">&lt;data type expression&gt;</div>
<div class="t m" style="left:779px;top:296.45px;font-size:8.5px;letter-spacing:0;transform:scaleX(.882);transform-origin:0 50%;color:#222">--- 刷新数据类型 ---</div>
<div class="t m" style="left:779px;top:304.30px;font-size:8.5px;letter-spacing:0;transform:scaleX(.882);transform-origin:0 50%;color:#fff">Enum: DT_HeatButtonSt</div>

<!-- AUTOSAR section -->
<div class="a" style="left:730px;top:491px;width:330px;height:1px;background:#e0e0e0"></div>
<svg class="a" style="left:733px;top:496px" width="8" height="6"><path d="M0 .5h7L3.5 5z" fill="#222"/></svg>
<div class="t m" style="left:742px;top:495px;font-size:9.2px;font-weight:bold;color:#222;letter-spacing:-.1px">AUTOSAR</div>
<div class="t m" style="left:734px;top:513px;font-size:8.5px;letter-spacing:0;transform:scaleX(.882);transform-origin:0 50%;color:#222">DisplayFormat:</div>
<div class="a" style="left:801px;top:510px;width:256px;height:14px;background:#fff;border:1px solid #a5a5a5"></div>
<div class="t m" style="left:734px;top:531px;font-size:8.5px;letter-spacing:0;transform:scaleX(.882);transform-origin:0 50%;color:#222">SwAddrMethod:</div>
<div class="a" style="left:797px;top:530px;width:260px;height:12px;background:#e3e3e3;border:1px solid #cfcfcf"></div>
<div class="t m" style="left:800px;top:532px;font-size:8.5px;letter-spacing:0;transform:scaleX(.882);transform-origin:0 50%;color:#444">&lt;None&gt;</div>
<svg class="a" style="left:1047px;top:533px" width="8" height="6"><path d="M.8 1L4 4.2L7.2 1" fill="none" stroke="#555" stroke-width="1"/></svg>
<div class="t m" style="left:734px;top:549px;font-size:8.5px;letter-spacing:0;transform:scaleX(.882);transform-origin:0 50%;color:#222">SwCalibrationAccess:</div>
<div class="a" style="left:828px;top:548px;width:229px;height:12px;background:#e3e3e3;border:1px solid #cfcfcf"></div>
<div class="t m" style="left:831px;top:550px;font-size:8.5px;letter-spacing:0;transform:scaleX(.882);transform-origin:0 50%;color:#222">ReadWrite</div>
<svg class="a" style="left:1047px;top:551px" width="8" height="6"><path d="M.8 1L4 4.2L7.2 1" fill="none" stroke="#555" stroke-width="1"/></svg>

<!-- stereotypes tab -->
<div class="a" style="left:1064px;top:103px;width:14px;height:59px;background:#fafafa;border:1px solid #ececec"></div>
<div class="t m" style="left:1066px;top:108px;font-size:8.5px;color:#222;transform-origin:0 0;transform:translate(9.5px,0) rotate(90deg) scaleX(.882)">Stereotypes</div>

<!-- taskbar -->
<div class="a" style="left:0;top:579px;width:1080px;height:5px;background:linear-gradient(90deg,#1c3a40 0,#1d3840 40%,#1c2f42 75%,#1b2a45 100%)"></div>
<div class="a" style="left:34px;top:579px;width:202px;height:5px;background:#ebebeb"></div>
<div class="a" style="left:550px;top:579px;width:35px;height:5px;background:#4c555b"></div>
<div class="a" style="left:900px;top:579px;width:180px;height:5px;background:#1c2a44"></div>
<div class="a" style="left:1007px;top:582px;width:3px;height:2px;background:#6a7488"></div>
<div class="a" style="left:1014px;top:582px;width:3px;height:2px;background:#6a7488"></div>
<div class="a" style="left:1024px;top:582px;width:4px;height:2px;background:#9aa2b0"></div>
<div class="a" style="left:1076px;top:580px;width:1px;height:4px;background:#6a7488"></div>
</body></html>
